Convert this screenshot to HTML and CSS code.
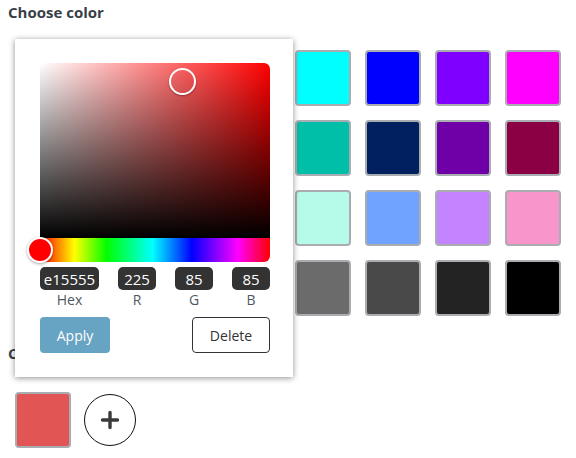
FILE: index.html
```html
<!DOCTYPE html>
<html lang="en">
<head>
  <meta charset="UTF-8">
  <meta name="viewport" content="width=device-width, initial-scale=1.0">
  <title>Color Picker</title>
  <link rel="stylesheet" href="styles.css">
</head>
<body>
  <div class="section-title">Choose color</div>
  <div class="palette">
    <div class="swatch" style="background:#ff0000"></div>
    <div class="swatch" style="background:#ff8000"></div>
    <div class="swatch" style="background:#ffff00"></div>
    <div class="swatch" style="background:#00ff00"></div>
    <div class="swatch" style="background:#00ffff"></div>
    <div class="swatch" style="background:#0000ff"></div>
    <div class="swatch" style="background:#8000ff"></div>
    <div class="swatch" style="background:#ff00ff"></div>

    <div class="swatch" style="background:#b00000"></div>
    <div class="swatch" style="background:#b05800"></div>
    <div class="swatch" style="background:#b0a000"></div>
    <div class="swatch" style="background:#00a040"></div>
    <div class="swatch" style="background:#00bfa9"></div>
    <div class="swatch" style="background:#002060"></div>
    <div class="swatch" style="background:#6f00a8"></div>
    <div class="swatch" style="background:#8b0044"></div>

    <div class="swatch" style="background:#ffb3b3"></div>
    <div class="swatch" style="background:#ffd6a8"></div>
    <div class="swatch" style="background:#fff5a8"></div>
    <div class="swatch" style="background:#b8f5c0"></div>
    <div class="swatch" style="background:#b6fbe9"></div>
    <div class="swatch" style="background:#6fa3ff"></div>
    <div class="swatch" style="background:#c484ff"></div>
    <div class="swatch" style="background:#f895cb"></div>

    <div class="swatch" style="background:#ffffff"></div>
    <div class="swatch" style="background:#d9d9d9"></div>
    <div class="swatch" style="background:#b3b3b3"></div>
    <div class="swatch" style="background:#8f8f8f"></div>
    <div class="swatch" style="background:#6b6b6b"></div>
    <div class="swatch" style="background:#494949"></div>
    <div class="swatch" style="background:#232323"></div>
    <div class="swatch" style="background:#000000"></div>
  </div>

  <div class="section-title custom-title">Custom colors</div>
  <div class="custom-row">
    <div class="swatch" style="background:#e15555"></div>
    <button class="add-btn" type="button" aria-label="Add color">
      <svg width="20" height="20" viewBox="0 0 20 20">
        <path d="M10 2.5v15M2.5 10h15" stroke="#3a3a3a" stroke-width="3.4" stroke-linecap="round" fill="none"/>
      </svg>
    </button>
  </div>

  <!-- picker popover, opened from the custom swatch -->
  <div class="picker">
    <div class="sat-area">
      <span class="sat-thumb"></span>
    </div>
    <div class="hue-bar">
      <span class="hue-thumb"></span>
    </div>
    <div class="fields">
      <div class="field field-hex">
        <input type="text" value="e15555">
        <label>Hex</label>
      </div>
      <div class="field">
        <input type="text" value="225">
        <label>R</label>
      </div>
      <div class="field">
        <input type="text" value="85">
        <label>G</label>
      </div>
      <div class="field">
        <input type="text" value="85">
        <label>B</label>
      </div>
    </div>
    <div class="actions">
      <button class="btn btn-apply" type="button">Apply</button>
      <button class="btn btn-delete" type="button">Delete</button>
    </div>
  </div>
</body>
</html>
```

FILE: styles.css
```css
body {
  font-family: 'Open Sans', 'Noto Sans', sans-serif;
  background-color: #fff;
  color: #3a3f47;
  margin: 0;
  padding: 2px 8px 0;
  position: relative;
}
.section-title {
  font-size: 15px;
  font-weight: 700;
  line-height: 20px;
  color: #3a3f47;
}
.palette {
  display: grid;
  grid-template-columns: repeat(8, 56px);
  grid-auto-rows: 56px;
  gap: 14px;
  margin: 28px 0 0 7px;
}
.swatch {
  width: 56px;
  height: 56px;
  box-sizing: border-box;
  border: 2px solid #a9acb0;
  border-radius: 4px;
}
.custom-title {
  margin-top: 27px;
}
.custom-row {
  display: flex;
  align-items: center;
  gap: 13px;
  margin: 29px 0 0 7px;
}
.add-btn {
  width: 52px;
  height: 52px;
  border: 1.5px solid #111;
  border-radius: 50%;
  background: #fff;
  padding: 0;
  display: flex;
  align-items: center;
  justify-content: center;
}

/* popover */
.picker {
  position: absolute;
  left: 15px;
  top: 39px;
  width: 278px;
  box-sizing: border-box;
  padding: 24px 23px 24px 25px;
  background-color: #fff;
  box-shadow: 0 1px 6px rgba(0, 0, 0, 0.45);
}
.sat-area {
  position: relative;
  width: 230px;
  height: 175px;
  border-radius: 6px 6px 0 0;
  background:
    linear-gradient(to top, #000, rgba(0, 0, 0, 0)),
    linear-gradient(to right, #fff, #f00);
}
.sat-thumb {
  position: absolute;
  left: 129px;
  top: 5px;
  width: 27px;
  height: 27px;
  box-sizing: border-box;
  border: 2px solid #fff;
  border-radius: 50%;
  box-shadow: 0 1px 2px rgba(0, 0, 0, 0.35);
}
.hue-bar {
  position: relative;
  width: 230px;
  height: 24px;
  border-radius: 0 0 6px 6px;
  background: linear-gradient(to right, #f00 0%, #ff0 15%, #0f0 29%, #0ff 49%, #00f 66%, #f0f 86%, #f00 100%);
}
.hue-thumb {
  position: absolute;
  left: -13px;
  top: -1px;
  width: 26px;
  height: 26px;
  box-sizing: border-box;
  border: 2px solid #fff;
  border-radius: 50%;
  background-color: #f00;
  box-shadow: 0 1px 3px rgba(0, 0, 0, 0.35);
}
.fields {
  display: flex;
  justify-content: space-between;
  margin-top: 5px;
  width: 230px;
}
.field {
  display: flex;
  flex-direction: column;
  align-items: center;
}
.field input {
  width: 38px;
  height: 23px;
  box-sizing: border-box;
  padding: 0;
  border: none;
  border-radius: 5px;
  background-color: #333;
  color: #fff;
  font-family: inherit;
  font-size: 15px;
  text-align: center;
}
.field-hex input {
  width: 59px;
}
.field label {
  font-size: 14px;
  line-height: 19px;
  color: #4f5862;
}
.actions {
  display: flex;
  justify-content: space-between;
  margin-top: 8px;
  width: 230px;
}
.btn {
  height: 36px;
  border-radius: 4px;
  font-family: inherit;
  font-size: 14px;
  cursor: pointer;
}
.btn-apply {
  width: 70px;
  border: none;
  background-color: #67a3c2;
  color: #fff;
}
.btn-delete {
  width: 78px;
  border: 1px solid #333;
  background-color: #fff;
  color: #333;
}
```
